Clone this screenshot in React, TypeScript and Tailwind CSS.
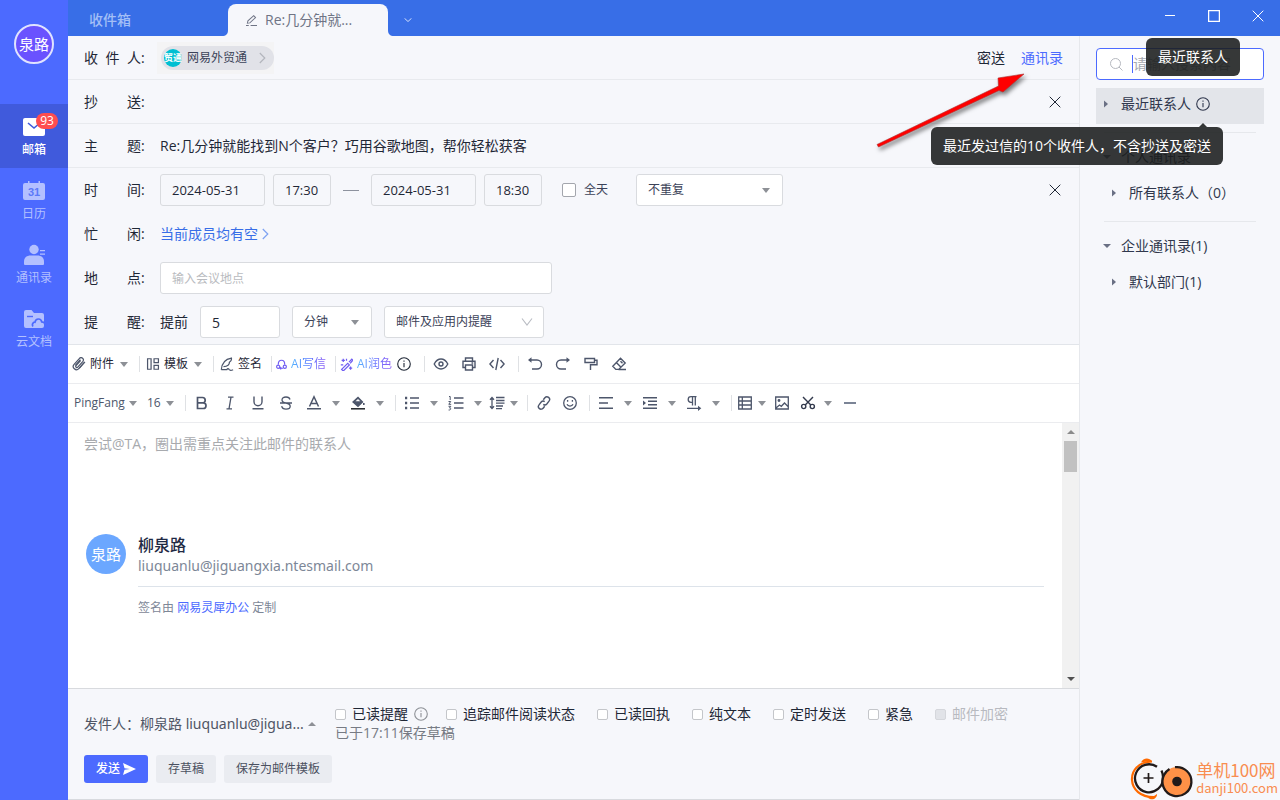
import React from "react";
import { clsx } from "clsx";

type IconProps = {
  children: React.ReactNode;
  className?: string;
  box?: string;
  sw?: number;
};

// line icon on a 16px grid
function Icon({ children, className = "size-4", box = "0 0 16 16", sw = 1.3 }: IconProps) {
  return (
    <svg
      viewBox={box}
      className={clsx("shrink-0", className)}
      fill="none"
      stroke="currentColor"
      strokeWidth={sw}
      aria-hidden="true"
    >
      {children}
    </svg>
  );
}

function Caret({ className = "w-4" }: { className?: string }) {
  return (
    <span className={clsx("flex shrink-0 justify-center text-[#8d9096]", className)}>
      <svg viewBox="0 0 8 5" className="h-[5px] w-2" fill="currentColor" aria-hidden="true">
        <path d="M0 0h8L4 5z" />
      </svg>
    </span>
  );
}

function InfoIcon({ className }: { className?: string }) {
  return (
    <Icon className={className} box="0 0 14 14" sw={1.1}>
      <circle cx="7" cy="7" r="6.3" />
      <path d="M7 6v4.3M7 3.4v1.3" />
    </Icon>
  );
}

function CloseIcon({ className = "size-3" }: { className?: string }) {
  return (
    <Icon className={className} box="0 0 12 12" sw={1}>
      <path d="M.7.7l10.6 10.6M11.3.7L.7 11.3" />
    </Icon>
  );
}

const navItems = [
  {
    label: "邮箱",
    active: true,
    badge: "93",
    icon: (
      <>
        <rect x="0" y="2" width="22" height="18" rx="2" fill="#fff" />
        <path d="M5 7l6 5 6-5" stroke="#405adc" strokeWidth="1.6" fill="none" />
      </>
    ),
  },
  {
    label: "日历",
    icon: (
      <>
        <path d="M2 3h3V1h1.5v2h9V1H17v2h3a2 2 0 012 2v13a2 2 0 01-2 2H2a2 2 0 01-2-2V5a2 2 0 012-2z" fill="currentColor" />
        <text x="11" y="16" textAnchor="middle" fontSize="11" fontWeight="700" fill="#5c79f8" className="font-['Liberation_Sans',sans-serif]">
          31
        </text>
      </>
    ),
  },
  {
    label: "通讯录",
    icon: (
      <g fill="currentColor">
        <circle cx="11" cy="5.5" r="4.7" />
        <path d="M1 20v-2.500c0-4 3-6 6.500-6h7c3.500 0 6.500 2 6.500 6V20a1 1 0 01-1 1H2a1 1 0 01-1-1z" />
        <path d="M17 6h5v1.300h-5zM17 9.500h5v1.300h-5z" />
      </g>
    ),
  },
  {
    label: "云文档",
    icon: (
      <>
        <path d="M3 2h5.500l2.500 3h8a2 2 0 012 2v11a2 2 0 01-2 2H3a2 2 0 01-2-2V4a2 2 0 012-2z" fill="currentColor" />
        <path d="M4 8.500h6" stroke="#4c6aff" strokeWidth="1.400" />
        <path d="M10 18.500c-1.500-2 .2-4.600 2-4.300.7-4.200 6-4.200 6.700-.400 2 0 3.300 1.600 3.300 3.200" fill="none" stroke="#4c6aff" strokeWidth="1.700" />
      </>
    ),
  },
];

function Sidebar() {
  return (
    <aside className="flex w-[68px] shrink-0 flex-col items-center bg-[#4c6aff] pt-6">
      <div className="flex size-10 items-center justify-center rounded-full border-2 border-[#dfe3ff] bg-[#6a52ff] text-[15px] text-white">
        泉路
      </div>
      <nav className="mt-10 w-full">
        {navItems.map((item) => (
          <a
            key={item.label}
            href="#"
            className={clsx(
              "flex h-16 flex-col items-center justify-center gap-1 pt-0.5 text-xs",
              item.active ? "bg-[#405adc] font-medium text-white" : "text-[#b3c0ff]"
            )}
          >
            <span className="relative">
              <svg viewBox="0 0 22 22" className="size-[22px]" aria-hidden="true">
                {item.icon}
              </svg>
              {item.badge && (
                <span className="absolute -top-[3px] left-[13px] flex h-4 w-[22px] items-center justify-center rounded-full bg-[#ff4d4f] font-normal">
                  {item.badge}
                </span>
              )}
            </span>
            <span>{item.label}</span>
          </a>
        ))}
      </nav>
    </aside>
  );
}

function TitleBar() {
  return (
    <header className="flex h-9 items-end bg-[#386ee7] text-sm">
      <button className="h-8 w-40 pl-[21px] text-left font-medium text-[#a3bff6]">收件箱</button>
      <button className="relative flex h-8 w-40 items-center gap-2 rounded-t-lg bg-[#f6f7fb] pl-[18px] text-[#6f7485]">
        <svg viewBox="0 0 6 6" className="absolute bottom-0 -left-1.5 size-1.5" fill="#f6f7fb" aria-hidden="true">
          <path d="M6 0v6H0c4 0 6-2 6-6z" />
        </svg>
        <Icon className="size-[11px]" box="0 0 12 12" sw={1.1}>
          <path d="M1.500 9l.6-2.600L8.400.8l2 2L4.200 8.600 1.500 9zM5 11.400h7M0 11.400h3" />
        </Icon>
        Re:几分钟就...
        <svg viewBox="0 0 6 6" className="absolute -right-1.5 bottom-0 size-1.5" fill="#f6f7fb" aria-hidden="true">
          <path d="M0 0v6h6C2 6 0 4 0 0z" />
        </svg>
      </button>
      <button className="flex size-8 items-center justify-center pl-2 text-[#cfdcfb]" aria-label="更多标签">
        <Icon className="h-1 w-2" box="0 0 8 4" sw={1}>
          <path d="M.5.3L4 3.500 7.500.3" />
        </Icon>
      </button>
      <div className="mb-3.5 ml-auto flex items-center gap-8 pr-4 text-white">
        <button aria-label="最小化">
          <Icon className="size-3" box="0 0 12 12" sw={1}>
            <path d="M1 5.500h10" />
          </Icon>
        </button>
        <button aria-label="最大化">
          <Icon className="size-3" box="0 0 12 12">
            <path d="M.6.6h10.800v10.800H.6z" />
          </Icon>
        </button>
        <button aria-label="关闭">
          <CloseIcon />
        </button>
      </div>
    </header>
  );
}

type RowProps = {
  label: string;
  htmlFor?: string;
  bordered?: boolean;
  children?: React.ReactNode;
};

function Row({ label, htmlFor, bordered, children }: RowProps) {
  return (
    <div className={clsx("flex h-11 items-center px-4", bordered && "border-b border-[#e8eaee]")}>
      <label htmlFor={htmlFor} className="flex w-[76px] shrink-0">
        <span className="w-[57px] [text-align-last:justify]">{label}</span>:
      </label>
      {children}
    </div>
  );
}

const fieldClass = "h-8 rounded-[3px] border border-[#d9dbdf] px-[11px]";

type SelectProps = {
  label: string;
  value: string;
  className: string;
  thin?: boolean;
};

function Select({ label, value, className, thin }: SelectProps) {
  return (
    <span className={clsx("relative flex items-center", className)}>
      <select aria-label={label} className={clsx(fieldClass, "w-full appearance-none bg-white text-xs text-[#3b4258]")}>
        <option>{value}</option>
      </select>
      <span className="pointer-events-none absolute right-[11px] text-[#b9bcc3]">
        {thin ? (
          <Icon className="h-2 w-3" box="0 0 12 8" sw={1.1}>
            <path d="M1 .5l5 6.500L11 .5" />
          </Icon>
        ) : (
          <Caret className="w-3" />
        )}
      </span>
    </span>
  );
}

function MailForm() {
  return (
    <form className="border-b border-[#e2e5ea] text-sm text-[#1f2736]">
      <Row label="收件人" bordered>
        <div className="-ml-[3px] flex h-8 items-center bg-[#f4f4f5] pl-1">
          <button type="button" className="flex h-6 items-center rounded-full bg-[#e1e2e8] pr-2 pl-[3px] text-xs text-[#3b4258]">
            <span className="mr-[5px] flex size-[18px] items-center justify-center rounded-full bg-[#00bfd2] text-[9px] font-bold whitespace-nowrap text-white">
              贸通
            </span>
            网易外贸通
            <Icon className="ml-3 h-3 w-[7px] text-[#b3b6bd]" box="0 0 7 12" sw={1.2}>
              <path d="M.8 1l5 5-5 5" />
            </Icon>
          </button>
        </div>
        <button type="button" className="ml-auto">密送</button>
        <button type="button" className="ml-4 text-[#4c6aff]">通讯录</button>
      </Row>
      <Row label="抄送" htmlFor="cc" bordered>
        <input id="cc" className="min-w-0 flex-1 outline-none" />
        <button type="button" aria-label="移除抄送" className="mr-0.5">
          <CloseIcon />
        </button>
      </Row>
      <Row label="主题" htmlFor="subject" bordered>
        <input
          id="subject"
          className="min-w-0 flex-1 outline-none"
          defaultValue="Re:几分钟就能找到N个客户？巧用谷歌地图，帮你轻松获客"
        />
      </Row>
      <Row label="时间" htmlFor="start">
        <div className="flex items-center gap-2 text-[13px]">
          <input id="start" className={clsx(fieldClass, "w-[105px]")} defaultValue="2024-05-31" />
          <input aria-label="开始时间" className={clsx(fieldClass, "w-[58px]")} defaultValue="17:30" />
          <span className="mx-1 h-px w-4 bg-[#8d929e]" />
          <input aria-label="结束日期" className={clsx(fieldClass, "w-[105px]")} defaultValue="2024-05-31" />
          <input aria-label="结束时间" className={clsx(fieldClass, "w-[58px]")} defaultValue="18:30" />
        </div>
        <label className="mr-7 ml-5 flex items-center gap-2 text-xs text-[#3b4258]">
          <input type="checkbox" className="size-3.5 appearance-none rounded-[2px] border border-[#a3a6ad] bg-white" />
          全天
        </label>
        <Select label="重复" value="不重复" className="w-[147px]" />
        <button type="button" aria-label="移除日程" className="mr-0.5 ml-auto">
          <CloseIcon />
        </button>
      </Row>
      <Row label="忙闲">
        <a href="#" className="flex items-center gap-1 text-[#386ee7]">
          当前成员均有空
          <Icon className="h-3 w-[7px] text-[#7da2f2]" box="0 0 7 12" sw={1.2}>
            <path d="M.8 1l5 5-5 5" />
          </Icon>
        </a>
      </Row>
      <Row label="地点" htmlFor="place">
        <input
          id="place"
          placeholder="输入会议地点"
          className={clsx(fieldClass, "w-[392px] bg-white text-xs placeholder:text-[#b9bbc0]")}
        />
      </Row>
      <Row label="提醒" htmlFor="remind">
        <div className="flex items-center gap-3">
          提前
          <input id="remind" className={clsx(fieldClass, "w-20 bg-white")} defaultValue="5" />
          <Select label="单位" value="分钟" className="w-20" />
          <Select label="提醒方式" value="邮件及应用内提醒" className="w-40" thin />
        </div>
      </Row>
    </form>
  );
}

function Sep() {
  return <span className="mr-0.5 ml-[7px] h-4 w-px shrink-0 bg-[#dfe1e4]" />;
}

type ToolProps = {
  label: string;
  children: React.ReactNode;
  className?: string;
};

function Tool({ label, children, className = "w-7" }: ToolProps) {
  return (
    <button aria-label={label} className={clsx("flex h-7 shrink-0 items-center justify-center", className)}>
      {children}
    </button>
  );
}

function TopTools() {
  return (
    <div className="flex h-[39px] items-center border-b border-[#ebecef] text-xs text-[#1f2736]">
      <button className="flex items-center pl-1">
        <Icon className="mr-1 size-3.5 text-[#4d566b]" sw={1.4}>
          <path d="M13.800 6.500l-6 6.700a3.600 3.600 0 01-5.400-4.800l6.200-6.900a2.600 2.600 0 013.900 3.400l-5.900 6.600a1.300 1.300 0 01-2-1.700l5.200-5.800" />
          <path d="M14.800 5.500l-6.400 7.200M3.800 9.500l5.800-6.500" />
        </Icon>
        附件
        <Caret className="ml-0.5 w-4" />
      </button>
      <Sep />
      <button className="flex items-center pl-1">
        <Icon className="mr-1 size-3.5 text-[#4d566b]" sw={1.4}>
          <path d="M1.800 2h4v12h-4zM9.200 2h5v4.500h-5zM9.200 9.500h5V14h-5z" />
        </Icon>
        模板
        <Caret className="ml-0.5 w-4" />
      </button>
      <Sep />
      <button className="flex items-center pr-0.5 pl-1">
        <Icon className="mr-1 size-3.5 text-[#4d566b]" sw={1.4}>
          <path d="M1.500 14.500C2 8 5 2.500 13 1.200c.6 2.400-.6 3.800-2.300 4.800.3 2.600-2 4.600-6.700 5M1.500 14.500h6.300c.6-1.600 2.400-1.600 2.600 0 .8.800 2.800.8 4.600 0" />
        </Icon>
        签名
      </button>
      <Sep />
      <button className="flex items-center gap-1 px-0.5">
        <Icon className="size-[11px] text-[#6f5cf2]" sw={1.7}>
          <path d="M3.500 8.300C2.800 4.200 5 1.800 8 1.800s5.200 2.400 4.500 6.500M5.800 13.500h4.400M7.500 11.800L5.800 13.500l1.700 1.700" />
          <circle cx="3.200" cy="11.300" r="2.300" />
          <circle cx="12.800" cy="11.300" r="2.300" />
        </Icon>
        <span className="bg-linear-to-r from-[#55b4ff] via-[#5579ff] to-[#8a5cf5] bg-clip-text text-transparent">AI写信</span>
      </button>
      <Sep />
      <button className="flex items-center gap-1 px-0.5">
        <Icon className="size-[13px] text-[#6f5cf2]" sw={1.5}>
          <path d="M2 14l7.500-7.500 2 2L4 16zM11 5l3.500-3.500 1.300 1.300L12.500 6.500M4 1v4M2 3h4M8 1v2.500M1 8.500h3M11 12.500h4M13 10.500v4" />
        </Icon>
        <span className="bg-linear-to-r from-[#55b4ff] via-[#6a79ff] to-[#8a5cf5] bg-clip-text text-transparent">AI润色</span>
      </button>
      <Tool label="AI 说明" className="mr-[3px] w-5">
        <InfoIcon className="size-3.5" />
      </Tool>
      <Sep />
      <div className="flex text-[#4d566b]">
        <Tool label="预览">
          <Icon sw={1.4}>
            <path d="M1.200 8C3 4.600 5.300 3 8 3s5 1.600 6.800 5C13 11.400 10.700 13 8 13s-5-1.600-6.800-5z" />
            <circle cx="8" cy="8" r="2" />
          </Icon>
        </Tool>
        <Tool label="打印">
          <Icon sw={1.4}>
            <path d="M4.500 5V2h7v3M4.500 11.500H2V5.200h12v6.300h-2.500M4.500 9h7v5h-7zM10.500 7h1.700" />
          </Icon>
        </Tool>
        <Tool label="源代码">
          <Icon sw={1.4}>
            <path d="M4.500 4L.9 8l3.600 4M11.500 4l3.600 4-3.600 4M9.200 2L6.800 14" />
          </Icon>
        </Tool>
      </div>
      <Sep />
      <div className="flex text-[#4d566b]">
        <Tool label="撤销">
          <Icon sw={1.4}>
            <path d="M2.500 4h7.500a4.500 4.500 0 010 9H5" />
            <path d="M1 4l3.500-2.800v5.600z" fill="currentColor" stroke="none" />
          </Icon>
        </Tool>
        <Tool label="重做">
          <Icon sw={1.4}>
            <path d="M13.500 4H6a4.500 4.500 0 000 9h5" />
            <path d="M15 4l-3.500-2.800v5.600z" fill="currentColor" stroke="none" />
          </Icon>
        </Tool>
        <Tool label="格式刷">
          <Icon sw={1.4}>
            <path d="M2 2.500h9.500v4H2zM11.500 4.200H14v4.500H7.500V14" />
          </Icon>
        </Tool>
        <Tool label="清除格式">
          <Icon sw={1.4}>
            <path d="M9.500 2.200l4.700 4.700-6.500 6.500H4.800L1.800 10.200zM5.300 6.500l4.700 4.700M7.500 13.500h7.500M9.500 5.200l2 2" />
          </Icon>
        </Tool>
      </div>
    </div>
  );
}

function FormatTools() {
  return (
    <div className="flex h-[39px] items-center border-b border-[#ebecef] pl-1.5 text-xs text-[#4d566b]">
      <button className="flex items-center">
        <span className="w-[51px] text-left">PingFang</span>
        <Caret />
      </button>
      <button className="ml-1.5 flex items-center">
        <span className="w-[15px] text-left">16</span>
        <Caret />
      </button>
      <Sep />
      <Tool label="加粗">
        <Icon sw={1.7}>
          <path d="M3.500 2.500h5a2.700 2.700 0 010 5.400h-5zM3.500 7.900h5.700a2.800 2.800 0 010 5.600H3.500z" />
        </Icon>
      </Tool>
      <Tool label="斜体">
        <Icon>
          <path d="M6 2.200h5.500M4.500 13.800H10M9 2.200L7 13.800" />
        </Icon>
      </Tool>
      <Tool label="下划线">
        <Icon sw={1.4}>
          <path d="M4 1.500v5.300a4 4 0 008 0V1.500M2.500 13.700h11" />
        </Icon>
      </Tool>
      <Tool label="删除线">
        <Icon>
          <path d="M12 4.500C11.600 2.800 10 2 8 2 5.500 2 4 3.200 4 5c0 1.500 1 2.400 4 3 3 .6 4.200 1.500 4.200 3.200 0 1.800-1.700 2.900-4.200 2.900-2.600 0-4-1.200-4.300-3M2 8h12" />
        </Icon>
      </Tool>
      <Tool label="文字颜色">
        <Icon sw={1.5}>
          <path d="M3.500 11.500L8 1.800l4.500 9.700M5 8.500h6M1 13.800h14" />
        </Icon>
      </Tool>
      <Caret />
      <Tool label="背景颜色">
        <Icon>
          <path d="M3 7l5-4.500L12.500 7 8 11.300z" fill="#4d566b" />
          <path d="M5.500 6.200h4.800L8 4z" fill="#fff" stroke="none" />
          <path d="M13.800 8v2" strokeWidth="1.600" />
          <path d="M1 13.800h14" stroke="#1f2329" strokeWidth="1.500" />
        </Icon>
      </Tool>
      <Caret />
      <Sep />
      <Tool label="无序列表">
        <Icon sw={1.5}>
          <path d="M6 3h9M6 8h9M6 13h9" />
          <path d="M1 3h2.200M1 8h2.200M1 13h2.200" strokeWidth="2.400" />
        </Icon>
      </Tool>
      <Caret />
      <Tool label="有序列表">
        <Icon sw={1.5}>
          <path d="M6 3h9.500M6 8h9.500M6 13h9.500" />
          <path d="M1 1.500h1.200V5M.5 6.500h2.200L.8 9.300h2.400M.5 11.300h2.300L1.500 13c2 0 1.500 2.300-.9 2" strokeWidth="1" />
        </Icon>
      </Tool>
      <Caret />
      <Tool label="行高" className="w-[22px]">
        <Icon>
          <path d="M3 3v10M1 4.700L3 2.500l2 2.200M1 11.300l2 2.200 2-2.200M7 2.500h8.500M7 5.500h8.500M7 8.200h8.500M7 11h7M7 13.700h6" />
        </Icon>
      </Tool>
      <Caret className="w-3" />
      <Sep />
      <Tool label="链接">
        <Icon sw={1.4}>
          <path d="M7.300 4.800l1.600-2a2.600 2.600 0 014.100 3.300L10.800 9a2.500 2.500 0 01-3.500.4M8.700 11.200l-1.600 2A2.600 2.600 0 013 9.900L5.200 7a2.500 2.500 0 013.500-.4" />
        </Icon>
      </Tool>
      <Tool label="表情" className="w-6">
        <Icon>
          <circle cx="8" cy="8" r="6.300" />
          <path d="M5 9.300c1 2.300 5 2.300 6 0M5.600 5v1.800M10.400 5v1.800" />
        </Icon>
      </Tool>
      <Sep />
      <Tool label="对齐">
        <Icon sw={1.4}>
          <path d="M1 2.800h14M1 8h9M1 13.200h14" />
        </Icon>
      </Tool>
      <Caret />
      <Tool label="缩进">
        <Icon sw={1.4}>
          <path d="M1 2.800h14M6 6.200h9M6 9.700h9M1 13.200h14" />
          <path d="M1 5.500L4 8l-3 2.500z" fill="currentColor" stroke="none" />
        </Icon>
      </Tool>
      <Caret />
      <Tool label="段落方向">
        <Icon>
          <path d="M10.500 1.700H5a2.800 2.800 0 000 5.600h1.500M6.500 1.700v8.800M9.300 1.700v8.800M1 13.300h12" />
          <path d="M15.300 13.300L12 10.700v5.200z" fill="currentColor" stroke="none" />
        </Icon>
      </Tool>
      <Caret />
      <Sep />
      <Tool label="表格" className="w-[22px]">
        <Icon>
          <path d="M1.700 2h12.600v12H1.700zM5.300 2v12M1.700 6h12.600M1.700 10h12.600" />
        </Icon>
      </Tool>
      <Caret className="w-3" />
      <Tool label="图片">
        <Icon>
          <path d="M1.700 2h12.600v12H1.700zM2 13l3.500-3 1.800 1.300L10.500 8l3.500 3.500" />
          <circle cx="5" cy="5.500" r=".8" fill="currentColor" />
        </Icon>
      </Tool>
      <Tool label="截图" className="w-6 text-[#333a4d]">
        <Icon sw={1.4}>
          <circle cx="3.700" cy="11.500" r="2.100" />
          <circle cx="12.300" cy="11.500" r="2.100" />
          <path d="M3 2l7.800 8M13 2l-7.800 8" />
        </Icon>
      </Tool>
      <Caret />
      <Tool label="分割线">
        <span className="h-0.5 w-3 bg-[#7b8496]" />
      </Tool>
    </div>
  );
}

function Editor() {
  return (
    <div className="flex flex-1 bg-white">
      <div className="flex-1 pt-2.5 pr-[18px] pl-4">
        <textarea
          aria-label="正文"
          placeholder="尝试@TA，圈出需重点关注此邮件的联系人"
          className="block h-[101px] w-full resize-none text-sm leading-[22px] outline-none placeholder:text-[#a8aaae]"
        />
        <div className="ml-0.5 flex gap-3">
          <div className="flex size-10 shrink-0 items-center justify-center rounded-full bg-[#6ba7ff] text-[15px] text-white">
            泉路
          </div>
          <div className="flex-1">
            <div className="text-base leading-[22px] font-medium text-[#1f2a44]">柳泉路</div>
            <div className="font-['Noto_Sans',sans-serif] text-sm leading-5 text-[#7d8797]">
              liuquanlu@jiguangxia.ntesmail.com
            </div>
            <div className="mt-[10px] border-t border-[#dde3ea] pt-[13px] text-xs text-[#7d8797]">
              签名由{" "}
              <a href="#" className="text-[#4c6aff]">
                网易灵犀办公
              </a>{" "}
              定制
            </div>
          </div>
        </div>
      </div>
      <div className="flex w-[17px] flex-col items-center bg-[#f1f1f1] py-[7px]">
        <svg viewBox="0 0 8 4" className="h-1 w-2" fill="#8b8b8b" aria-hidden="true">
          <path d="M0 4h8L4 0z" />
        </svg>
        <div className="mt-[7px] h-[31px] w-[13px] bg-[#c1c1c1]" />
        <svg viewBox="0 0 8 4" className="mt-auto h-1 w-2" fill="#505050" aria-hidden="true">
          <path d="M0 0h8L4 4z" />
        </svg>
      </div>
    </div>
  );
}

const sendOptions = [
  { label: "已读提醒", info: true },
  { label: "追踪邮件阅读状态" },
  { label: "已读回执" },
  { label: "纯文本" },
  { label: "定时发送" },
  { label: "紧急" },
  { label: "邮件加密", disabled: true },
];

function SendBar() {
  return (
    <footer className="border-t border-b border-[#d8dade] px-4 pt-[15px] pb-4 text-sm">
      <div className="flex items-center">
        <button className="flex w-[251px] shrink-0 items-center gap-1 font-['Noto_Sans','Noto_Sans_CJK_SC',sans-serif] whitespace-nowrap text-[#4f5565]">
          发件人：柳泉路 liuquanlu@jigua...
          <svg viewBox="0 0 8 4" className="h-1 w-2" fill="#8d9096" aria-hidden="true">
            <path d="M0 4h8L4 0z" />
          </svg>
        </button>
        <div>
          <div className="flex h-5 items-center gap-[22px]">
            {sendOptions.map((o) => (
              <div key={o.label} className={clsx("flex items-center", o.info && "-mr-1")}>
                <label className={clsx("flex items-center gap-1.5 whitespace-nowrap", o.disabled ? "text-[#b8bac0]" : "text-[#1f2736]")}>
                  <input
                    type="checkbox"
                    disabled={o.disabled}
                    className="size-[11px] appearance-none rounded-[2px] border border-[#c4c6ca] bg-white disabled:border-[#d5d7dc] disabled:bg-[#e1e3e8]"
                  />
                  {o.label}
                </label>
                {o.info && <InfoIcon className="ml-1.5 size-3.5 text-[#8d9096]" />}
              </div>
            ))}
          </div>
          <div className="h-5 leading-[18px] text-[#777b84]">已于17:11保存草稿</div>
        </div>
      </div>
      <div className="mt-[11px] flex gap-2 text-xs text-[#4a5060]">
        <button className="flex h-7 items-center rounded-[3px] bg-[#4c6aff] px-3 font-medium text-white">
          发送
          <svg viewBox="0 0 13 12" className="ml-[3px] h-3 w-[13px]" fill="#fff" aria-hidden="true">
            <path d="M0 0l13 6L0 12l1.500-5.200L7 6 1.500 5.200z" />
          </svg>
        </button>
        <button className="h-7 rounded-[3px] bg-[#eaecf1] px-3">存草稿</button>
        <button className="h-7 rounded-[3px] bg-[#eaecf1] px-3">保存为邮件模板</button>
      </div>
    </footer>
  );
}

type TreeRowProps = {
  label: string;
  open?: boolean;
  nested?: boolean;
  active?: boolean;
};

function TreeRow({ label, open, nested, active }: TreeRowProps) {
  return (
    <button
      className={clsx(
        "flex h-9 w-full items-center text-left",
        nested ? "pl-[15px]" : "pl-[7px]",
        active && "bg-[#e3e5ea] pb-1"
      )}
    >
      <svg viewBox="0 0 8 8" className="mr-[10px] size-2 text-[#6a7084]" fill="currentColor" aria-hidden="true">
        {open ? <path d="M0 2h8L4 6z" /> : <path d="M1 .5v7L5 4z" />}
      </svg>
      {label}
      {active && <InfoIcon className="ml-[5px] size-3.5" />}
    </button>
  );
}

function Contacts() {
  return (
    <aside className="w-[200px] shrink-0 px-4 pt-3 text-sm text-[#30374d]">
      <label className="mb-2 flex h-8 items-center rounded-[4px] border border-[#4c6aff] bg-white px-[13px] text-[#b5b8bf]">
        <Icon className="mr-[9px] size-[13px]" box="0 0 13 13" sw={1}>
          <circle cx="5.500" cy="5.500" r="5" />
          <path d="M9 9l3.500 3.500" />
        </Icon>
        <span className="h-[18px] w-px bg-[#4c6aff]" />
        <input aria-label="搜索" placeholder="请输入搜索内容" className="min-w-0 flex-1 outline-none placeholder:text-[#a5a8af]" />
      </label>
      <TreeRow label="最近联系人" active />
      <hr className="mx-2 mt-2 mb-1.5 border-[#e6e8ec]" />
      <TreeRow label="个人通讯录" open />
      <TreeRow label="所有联系人（0）" nested />
      <hr className="mx-2 mt-2.5 mb-1.5 border-[#e6e8ec]" />
      <TreeRow label="企业通讯录(1)" open />
      <TreeRow label="默认部门(1)" nested />
    </aside>
  );
}

// everything that floats over the window
function Overlays() {
  return (
    <>
      <svg viewBox="0 0 160 84" className="absolute top-[68px] right-[248px] h-[84px] w-40 drop-shadow-[2px_3px_2px_rgba(0,0,0,0.5)]" aria-hidden="true">
        <path d="M5 76.500L6.500 79 127 22.500l4 1.500L152 6l-26 4 .5 8z" fill="#f00" stroke="#a33" strokeWidth=".6" />
      </svg>
      <div role="tooltip" className="absolute top-[38px] right-10 flex h-[38px] items-center rounded-md bg-[#1a1c1c]/88 px-3 text-sm text-white">
        最近联系人
      </div>
      <div role="tooltip" className="absolute top-[127px] right-[57px] flex h-[38px] items-center rounded-md bg-[#1a1c1c]/88 px-3 text-sm whitespace-nowrap text-white">
        最近发过信的10个收件人，不含抄送及密送
        <svg viewBox="0 0 8 4" className="absolute -top-1 right-4 h-1 w-2" fill="#343636" aria-hidden="true">
          <path d="M0 4h8L4 0z" />
        </svg>
      </div>
      <div className="absolute right-[2px] bottom-0 flex items-center gap-0.5 text-[#f98d50]">
        <svg viewBox="0 0 64 42" className="h-[42px] w-16" fill="none" aria-hidden="true">
          <path d="M22 3.500C8 4 1.500 13 2 22s8 17.500 23 17" stroke="#ff6a00" strokeWidth="2.200" />
          <path d="M11 4.500C13 0 19-1 22 3.500c-3-.8-6 0-11 1zM17 39c3 1.500 7-.5 10-3 .5 4-5 8-10 3z" fill="#ff6a00" />
          <path d="M27 8.800A14 14 0 1033 20M31.500 12.500c1.200 2.600 1.600 5 1.500 7.500" stroke="#211a1a" strokeWidth="2.300" />
          <circle cx="47" cy="23.500" r="14.500" fill="#ff9147" />
          <path d="M45 9.200A14.500 14.500 0 1134 17M34 17c1.500-3 3-4.500 5.500-6" stroke="#211a1a" strokeWidth="2.300" />
          <circle cx="47" cy="23.500" r="4.800" fill="#211a1a" />
          <path d="M18.500 15v10M13.500 20h10" stroke="#211a1a" strokeWidth="1.700" />
        </svg>
        <div className="font-['Noto_Sans_CJK_SC',sans-serif] leading-[18px] whitespace-nowrap">
          <div className="text-[17px]">单机100网</div>
          <div className="text-[13px]">danji100.com</div>
        </div>
      </div>
    </>
  );
}

export default function App() {
  return (
    <div className="relative flex min-h-screen bg-[#f6f7fb] font-['Open_Sans','Noto_Sans_CJK_SC',sans-serif]">
      <Sidebar />
      <div className="flex min-w-0 flex-1 flex-col">
        <TitleBar />
        <div className="flex flex-1">
          <main className="flex min-w-0 flex-1 flex-col border-r border-[#e6e8ec]">
            <MailForm />
            <div className="bg-white">
              <TopTools />
              <FormatTools />
            </div>
            <Editor />
            <SendBar />
          </main>
          <Contacts />
        </div>
      </div>
      <Overlays />
    </div>
  );
}
